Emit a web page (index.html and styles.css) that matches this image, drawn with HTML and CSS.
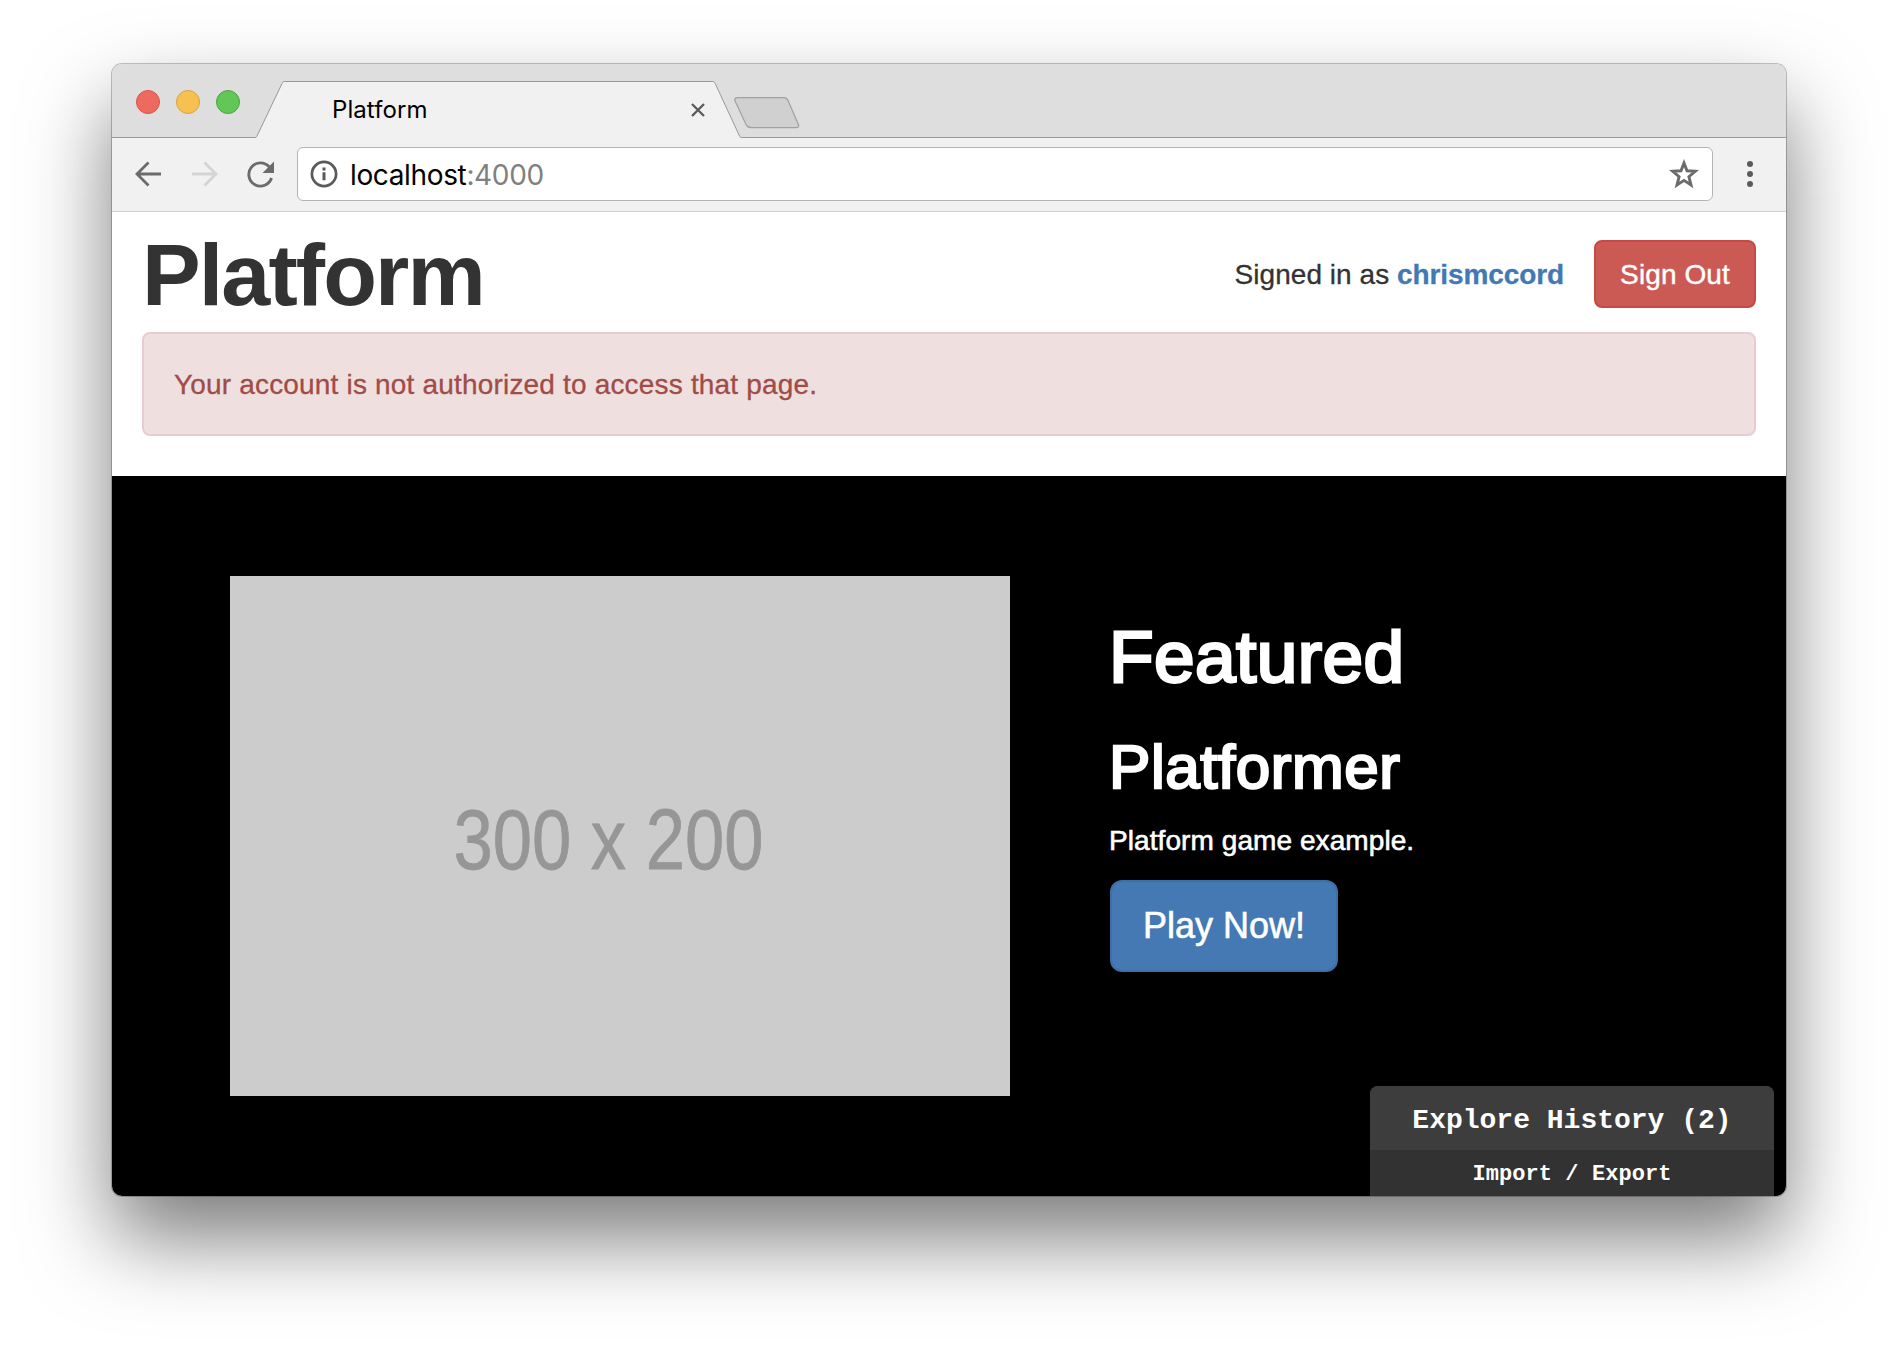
FILE: index.html
```html
<!DOCTYPE html>
<html lang="en">
<head>
<meta charset="utf-8">
<title>Platform</title>
<link rel="stylesheet" href="styles.css">
</head>
<body>
<div class="window">
  <div class="tabstrip">
    <div class="lights">
      <span class="light light-close"></span>
      <span class="light light-min"></span>
      <span class="light light-max"></span>
    </div>
    <div class="tab">
      <svg class="tab-shape" width="487" height="58" viewBox="0 0 487 58">
        <path d="M0 56.5C1 56.5 1.500 56 2 55L27 2.500C27.600 1 28.500 .5 30 .5H457C458.500 .5 459.500 1 460.200 2.500L484.500 55C485 56 485.500 56.500 487 56.500V58H0Z" fill="#f1f1f1"/>
        <path d="M0 56.500C1 56.500 1.500 56 2 55L27 2.500C27.600 1 28.500 .5 30 .5H457C458.500 .5 459.500 1 460.200 2.500L484.500 55C485 56 485.500 56.500 487 56.500" fill="none" stroke="#999"/>
      </svg>
      <span class="tab-title">Platform</span>
      <svg class="tab-close" width="14" height="14" viewBox="0 0 14 14"><path d="M1 1L13 13M13 1L1 13" stroke="#5a5a5a" stroke-width="2.300"/></svg>
    </div>
    <svg class="new-tab" width="66" height="32" viewBox="0 0 66 32">
      <path d="M4 .7H50C52 .7 53 1.500 54 3.500L64.200 27C65.200 29.500 64.500 30.700 62 30.700H17C14.500 30.700 13 29.500 12 27.500L1.300 4.500C.2 2 1 .7 4 .7Z" fill="#d0d0d0" stroke="#a0a0a0" stroke-width="1.200"/>
    </svg>
  </div>

  <div class="toolbar">
    <svg class="icon back" width="27" height="26" viewBox="0 0 27 26"><path d="M26 13H2M13.500 1.500L2 13L13.500 24.500" fill="none" stroke="#6b6b6b" stroke-width="2.800"/></svg>
    <svg class="icon forward" width="27" height="26" viewBox="0 0 27 26"><path d="M1 13H25M13.500 1.500L25 13L13.500 24.500" fill="none" stroke="#d4d4d4" stroke-width="2.800"/></svg>
    <svg class="icon reload" width="28" height="27" viewBox="0 0 28 27">
      <path d="M22.300 6A11.600 11.600 0 1 0 24.500 17" fill="none" stroke="#6b6b6b" stroke-width="2.900"/>
      <path d="M27 .5V12H15.500Z" fill="#6b6b6b"/>
    </svg>
    <div class="address">
      <svg class="info" width="28" height="28" viewBox="0 0 28 28">
        <circle cx="14" cy="14" r="12.100" fill="none" stroke="#5a5a5a" stroke-width="2.700"/>
        <path d="M14 7.600V10.600M14 12.300V20.300" stroke="#5a5a5a" stroke-width="3"/>
      </svg>
      <span class="url">localhost<span class="port">:4000</span></span>
      <svg class="star" width="30" height="30" viewBox="0 0 30 30">
        <path d="M15 4L18 11.800L26.300 12.300L19.900 17.700L22 26L15 21.400L8 26L10.100 17.700L3.700 12.300L12 11.800Z" fill="none" stroke="#6b6b6b" stroke-width="2.900"/>
      </svg>
    </div>
    <svg class="menu" width="6" height="26" viewBox="0 0 6 26"><g fill="#5a5a5a"><circle cx="3" cy="3" r="3"/><circle cx="3" cy="13" r="3"/><circle cx="3" cy="23" r="3"/></g></svg>
  </div>

  <main class="page">
    <header class="header">
      <h1 class="brand">Platform</h1>
      <p class="session">Signed in as <a class="user">chrismccord</a></p>
      <a class="btn btn-danger">Sign Out</a>
    </header>
    <div class="alert">Your account is not authorized to access that page.</div>

    <section class="hero">
      <div class="thumb">
        <svg width="780" height="520" viewBox="0 0 780 520"><text class="thumb-text" x="223.500" y="293" textLength="310" lengthAdjust="spacingAndGlyphs">300 x 200</text></svg>
      </div>
      <div class="feature">
        <h2 class="feature-label">Featured</h2>
        <h3 class="feature-title">Platformer</h3>
        <p class="feature-text">Platform game example.</p>
        <a class="btn btn-play">Play Now!</a>
      </div>
      <aside class="debugger">
        <div class="history">Explore History (2)</div>
        <div class="transfer">Import / Export</div>
      </aside>
    </section>
  </main>
</div>
</body>
</html>
```
FILE: styles.css
```css
* { box-sizing: border-box; }

body {
  margin: 0;
  height: 1356px;
  padding: 64px 112px 0;
  background: #fff;
  overflow: hidden;
  font-family: "Liberation Sans", Arial, sans-serif;
}

h1, h2, h3, p { margin: 0; }
svg { display: block; flex: none; }

.window {
  width: 1674px;
  height: 1132px;
  border-radius: 10px;
  background: #fff;
  box-shadow: 0 0 0 1px rgba(0, 0, 0, .23), 0 42px 84px rgba(0, 0, 0, .52);
}

/* Browser chrome */
.tabstrip {
  display: flex;
  height: 74px;
  padding-left: 24px;
  background: #dedede;
  border-bottom: 1px solid #999;
  border-radius: 10px 10px 0 0;
}
.lights { display: flex; gap: 16px; padding-top: 26px; }
.light { width: 24px; height: 24px; border-radius: 50%; border: 1px solid; }
.light-close { background: #ef6a5e; border-color: #d9534a; }
.light-min { background: #f7c151; border-color: #dca23b; }
.light-max { background: #61c756; border-color: #4aa73d; }

.tab {
  position: relative;
  display: flex;
  align-items: center;
  width: 487px;
  height: 58px;
  margin: 17px 0 0 15px;
  padding: 0 37px 0 77px;
}
.tab-shape { position: absolute; left: 0; top: 0; }
.tab-title {
  position: relative;
  flex: 1;
  color: #000;
  font: 24px/30px Inter, sans-serif;
  letter-spacing: .08px;
}
.tab-close { position: relative; }
.new-tab { margin: 33px 0 0 -8px; }

.toolbar {
  display: flex;
  align-items: center;
  height: 74px;
  padding: 0 33px 1px 23px;
  background: #f1f1f1;
  border-bottom: 1px solid #d0d0d0;
}
.forward { margin-left: 29px; }
.reload { margin-left: 29px; }
.address {
  display: flex;
  align-items: center;
  width: 1416px;
  height: 54px;
  margin-left: 22px;
  padding: 0 13px 0 12px;
  background: #fff;
  border: 1px solid #b4b4b4;
  border-radius: 6px;
}
.url {
  flex: 1;
  margin-left: 12px;
  padding-top: 2px;
  color: #000;
  font: 28px/36px Inter, sans-serif;
  letter-spacing: -.36px;
}
.port { color: #808080; }
.menu { margin-left: 34px; }

/* Page */
.header {
  display: flex;
  align-items: center;
  height: 120px;
  padding: 28px 30px 24px;
}
.brand {
  flex: 1;
  padding-top: 1px;
  color: #333;
  font-size: 88px;
  line-height: 68px;
  letter-spacing: -1.900px;
}
.session { margin-right: 30px; padding-top: 1px; color: #333; font-size: 28px; line-height: 68px; letter-spacing: .04px; -webkit-text-stroke: .3px; }
.user { color: #4279b5; font-weight: bold; letter-spacing: -.1px; }
.btn { display: flex; align-items: center; justify-content: center; color: #fff; }
.btn-danger {
  width: 162px;
  height: 68px;
  padding-top: 1px;
  background: #cb5a54;
  border: 2px solid #c54a43;
  border-radius: 8px;
  font-size: 28px;
  letter-spacing: .1px;
  -webkit-text-stroke: .4px;
}
.alert {
  height: 104px;
  margin: 0 30px 40px;
  padding-left: 30px;
  color: #a04c47;
  background: #efdfdf;
  border: 2px solid #e8ccd1;
  border-radius: 8px;
  font-size: 28px;
  line-height: 102px;
  letter-spacing: .18px;
  -webkit-text-stroke: .3px;
}
.hero {
  position: relative;
  display: flex;
  gap: 100px;
  height: 720px;
  padding: 100px 118px;
  background: #000;
  border-radius: 0 0 10px 10px;
}
.thumb { width: 780px; height: 520px; background: #ccc; }
.thumb-text {
  fill: #969696;
  stroke: #969696;
  stroke-width: .8px;
  font: 85px "Liberation Sans Narrow", "Liberation Sans", sans-serif;
}
.feature { padding-top: 41px; color: #fff; }
.feature-label {
  margin-left: -1px;
  font-size: 73px;
  font-weight: 400;
  line-height: 80px;
  letter-spacing: .4px;
  -webkit-text-stroke: 2.800px #fff;
}
.feature-title {
  margin: 36px 0 19px -1px;
  font-size: 62px;
  font-weight: 400;
  line-height: 68px;
  letter-spacing: .55px;
  -webkit-text-stroke: 2.400px #fff;
}
.feature-text { font-size: 28px; line-height: 42px; margin: 0 0 18px -1px; letter-spacing: .08px; -webkit-text-stroke: .6px #fff; }
.btn-play {
  width: 228px;
  height: 92px;
  background: #4479b3;
  border: 2px solid #3e6fa5;
  border-radius: 12px;
  font-size: 36px;
  -webkit-text-stroke: .6px #fff;
}
.debugger {
  position: absolute;
  right: 12px;
  bottom: 0;
  width: 404px;
  height: 110px;
  overflow: hidden;
  background: #323232;
  border-radius: 8px 8px 0 0;
  color: #fff;
  font-family: "Liberation Mono", "Courier New", monospace;
  font-weight: bold;
  text-align: center;
}
.history { height: 64px; padding-top: 3px; background: #3d3d3d; font-size: 28px; line-height: 64px; }
.transfer { padding-top: 2px; font-size: 22px; line-height: 46px; letter-spacing: .08px; }
```
